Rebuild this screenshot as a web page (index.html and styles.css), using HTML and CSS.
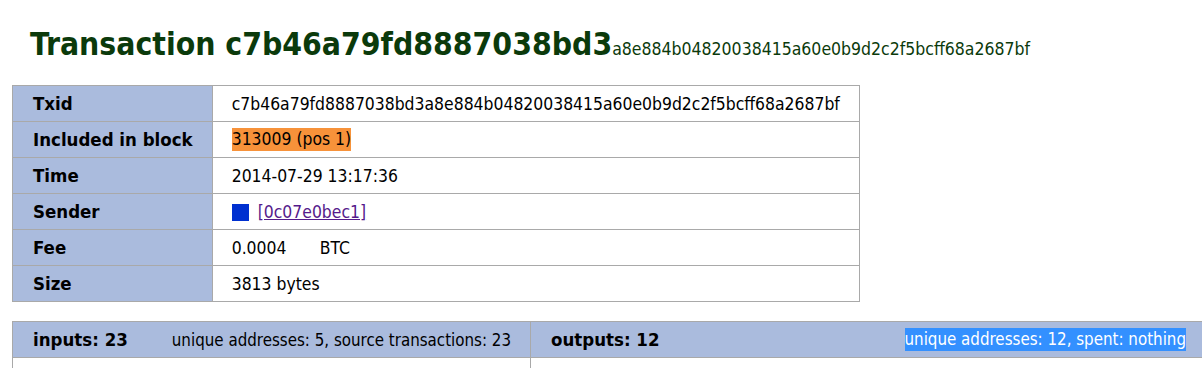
FILE: index.html
```html
<!DOCTYPE html>
<html>
<head>
<meta charset="utf-8">
<link rel="stylesheet" href="styles.css">
</head>
<body>
<h1 class="title">Transaction c7b46a79fd8887038bd3<span class="title-rest">a8e884b04820038415a60e0b9d2c2f5bcff68a2687bf</span></h1>
<table class="info">
  <tr><th>Txid</th><td>c7b46a79fd8887038bd3a8e884b04820038415a60e0b9d2c2f5bcff68a2687bf</td></tr>
  <tr><th>Included in block</th><td><span class="block">313009 (pos 1)</span></td></tr>
  <tr><th>Time</th><td>2014-07-29 13:17:36</td></tr>
  <tr><th>Sender</th><td><span class="swatch"></span><a class="addr" href="#">[0c07e0bec1]</a></td></tr>
  <tr><th>Fee</th><td><span class="amount">0.0004</span>BTC</td></tr>
  <tr><th>Size</th><td>3813 bytes</td></tr>
</table>
<table class="io">
  <tr class="io-head">
    <th class="io-in"><span class="io-title">inputs: 23</span><span class="io-meta">unique addresses: 5, source transactions: 23</span></th>
    <th class="io-out"><span class="io-title">outputs: 12</span><span class="io-meta io-sel">unique addresses: 12, spent: nothing</span></th>
  </tr>
  <tr class="io-body"><td></td><td></td></tr>
</table>
</body>
</html>
```

FILE: styles.css
```css
html, body {
  margin: 0;
  padding: 0;
  overflow: hidden;
  background: #fff;
}
body {
  font-family: "DejaVu Sans Condensed", "DejaVu Sans", sans-serif;
  font-size: 17.4px;
  color: #000;
  padding: 0 0 0 12px;
}
.title {
  margin: 0;
  padding: 26px 0 0 18px;
  height: 58px;
  box-sizing: border-box;
  font-size: 31.6px;
  font-weight: bold;
  line-height: 36px;
  color: #0b3a0b;
  white-space: nowrap;
}
.title-rest {
  font-size: 17.5px;
  font-weight: normal;
}
.info {
  margin-top: 27px;
  border-collapse: collapse;
  width: 846px;
}
.info th, .info td {
  border: 1px solid #a9a9a9;
  height: 35px;
  padding: 0 19px 0 20px;
  text-align: left;
  vertical-align: middle;
  line-height: 22px;
  white-space: nowrap;
}
.info th {
  width: 160px;
  background: #aabbdd;
  font-weight: bold;
  font-size: 18.5px;
}
.info td {
  padding-left: 19px;
}
.block {
  background: #f7923a;
  display: inline-block;
  line-height: 23px;
}
.swatch {
  display: inline-block;
  width: 17px;
  height: 17px;
  background: #0030d0;
  vertical-align: -3px;
  margin-right: 9px;
}
.addr {
  color: #551a8b;
}
.amount {
  display: inline-block;
  width: 88px;
}
.io {
  margin-top: 19px;
  border-collapse: collapse;
  width: 1220px;
}
.io th, .io td {
  border: 1px solid #a9a9a9;
  text-align: left;
  white-space: nowrap;
}
.io-head th {
  height: 35px;
  background: #aabbdd;
  padding: 0 0 0 20px;
  vertical-align: middle;
}
.io-in {
  width: 497px;
}
.io-title {
  font-weight: bold;
  font-size: 18.5px;
}
.io-meta {
  font-weight: normal;
  font-size: 16.8px;
  margin-left: 44px;
}
.io-out .io-meta {
  float: right;
  margin-right: 45px;
  margin-top: -1px;
}
.io-sel {
  background: #3390ff;
  color: #fff;
  line-height: 23px;
  display: inline-block;
}
.io-body td {
  height: 40px;
}
```
